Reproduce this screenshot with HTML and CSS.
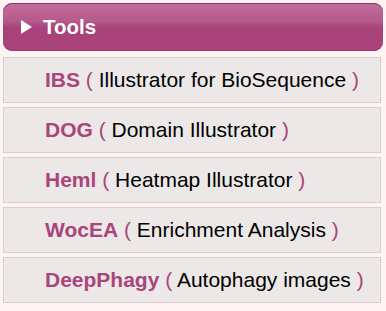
FILE: index.html
```html
<!DOCTYPE html>
<html>
<head>
	<title>Tools</title>
	<meta charset="utf-8">
	<link rel="stylesheet" href="styles.css">
</head>
<body>

<div class="panel">
	<div class="panel-head">
		<span class="arrow"></span>
		<span class="panel-title">Tools</span>
	</div>
	<ul class="tool-list">
		<li><a href="#"><b>IBS</b> <i>(</i> Illustrator for BioSequence <i>)</i></a></li>
		<li><a href="#"><b>DOG</b> <i>(</i> Domain Illustrator <i>)</i></a></li>
		<li><a href="#"><b>Heml</b> <i>(</i> Heatmap Illustrator <i>)</i></a></li>
		<li><a href="#"><b>WocEA</b> <i>(</i> Enrichment Analysis <i>)</i></a></li>
		<li><a href="#"><b>DeepPhagy</b> <i>(</i> Autophagy images <i>)</i></a></li>
	</ul>
</div>

</body>
</html>
```

FILE: styles.css
```css
body {
	margin: 0;
	padding: 3px 3px 0 3px;
	background: #fdf3f2;
	font-family: "Liberation Sans", Arial, sans-serif;
}
.panel {
	width: 380px;
}
.panel-head {
	display: flex;
	align-items: center;
	height: 48px;
	padding-left: 18px;
	border-radius: 9px;
	background: linear-gradient(#c26f9c 0%, #b65a8c 38%, #a8427a 52%, #ab437c 100%);
	box-shadow: inset 0 1px 0 #8a3a66, inset 0 -1px 1px #9a3a70;
	color: #fff;
	box-sizing: border-box;
}
.arrow {
	width: 0;
	height: 0;
	border-top: 7px solid transparent;
	border-bottom: 7px solid transparent;
	border-left: 11px solid #fff;
	margin-right: 11px;
}
.panel-title {
	font-size: 20.5px;
	font-weight: bold;
}
.tool-list {
	margin: 6px 0 0 0;
	padding: 0;
	list-style: none;
	width: 378px;
}
.tool-list li {
	margin: 0 0 4px 0;
	height: 46px;
	box-sizing: border-box;
	border: 1px solid #d8cece;
	background: #ece8e8;
	display: flex;
	align-items: center;
	padding-left: 41px;
}
.tool-list a {
	font-size: 21px;
	color: #000;
	text-decoration: none;
}
.tool-list b {
	color: #a8457a;
}
.tool-list i {
	font-style: normal;
	color: #a8457a;
}
```
